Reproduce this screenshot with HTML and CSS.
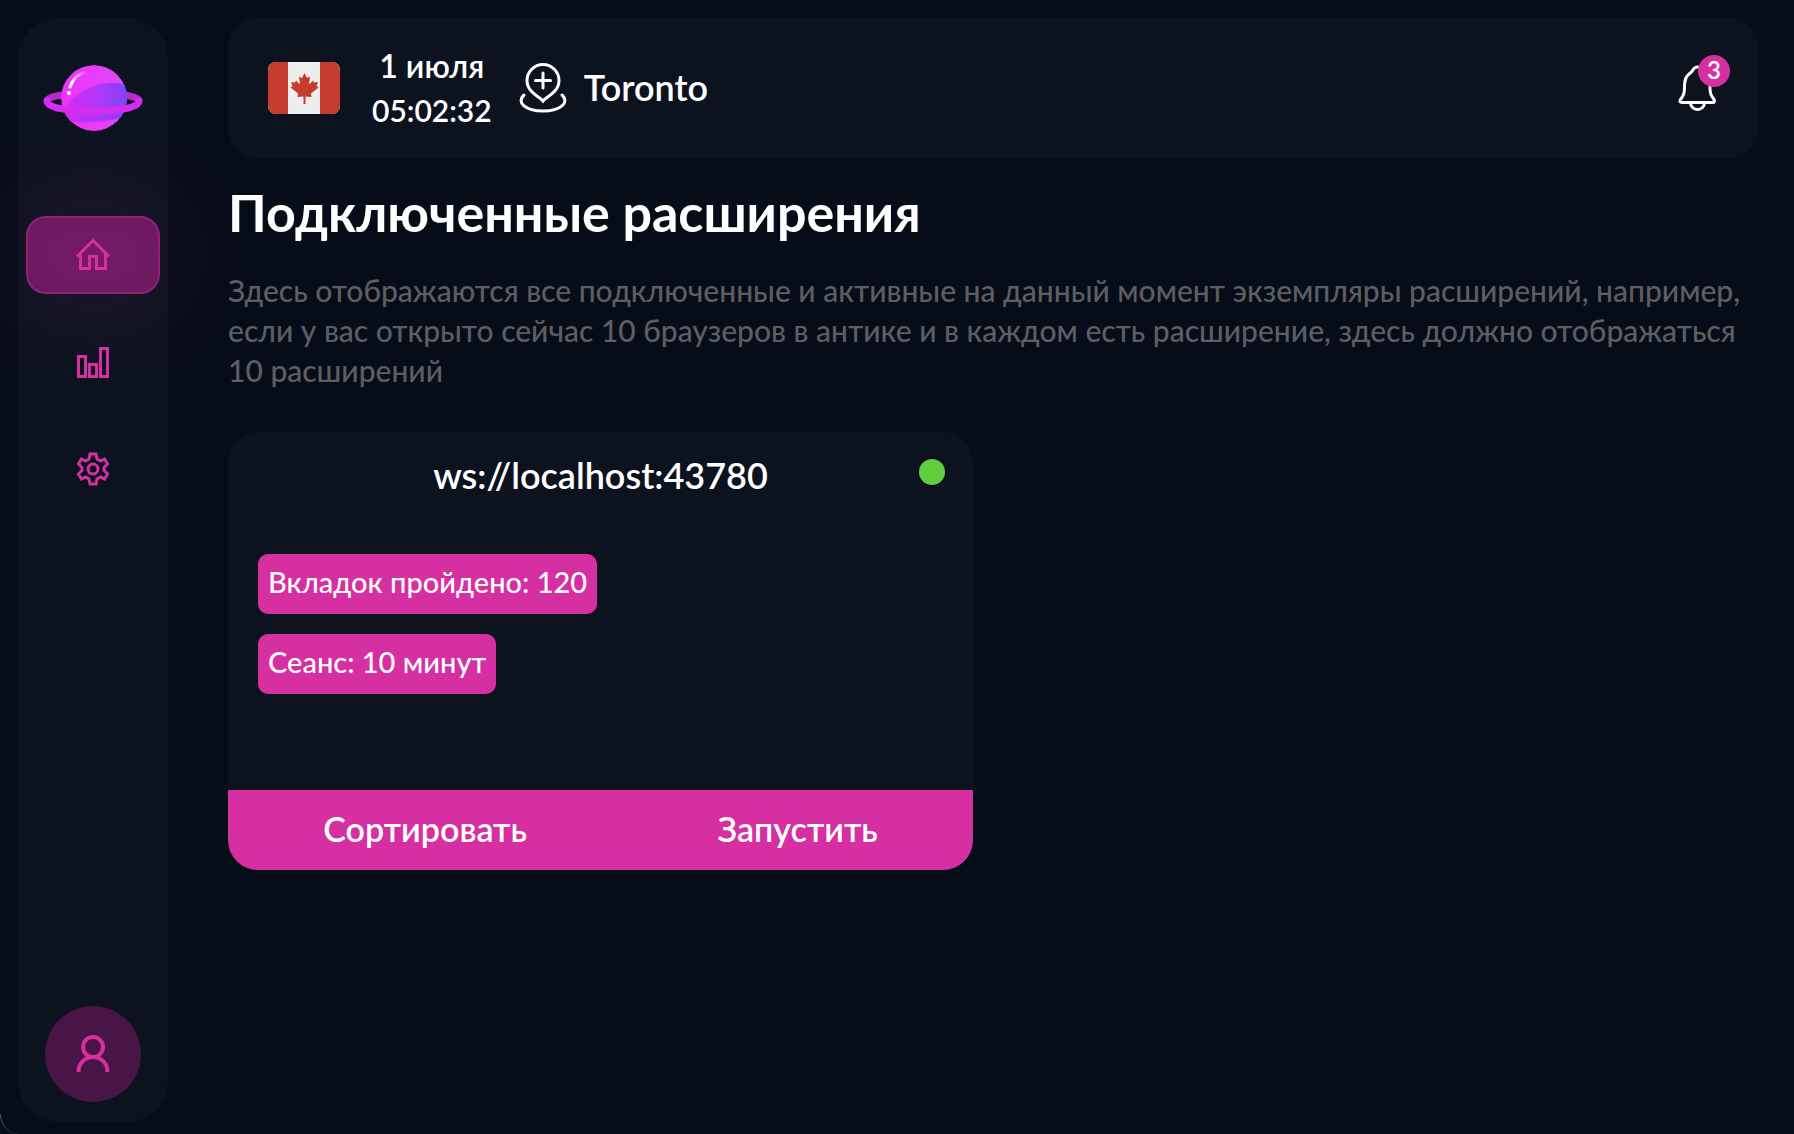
FILE: index.html
```html
<!DOCTYPE html>
<html lang="ru">
<head>
  <meta charset="utf-8">
  <meta name="viewport" content="width=device-width, initial-scale=1">
  <title>Подключенные расширения</title>
  <link rel="stylesheet" href="styles.css">
</head>
<body>
  <div class="layout">
    <aside class="sidebar">
      <a href="#" class="logo" aria-label="Главная">
        <svg width="100" height="66" viewBox="0 0 100 66">
          <defs>
            <linearGradient id="ball" x1="0" x2="1"><stop offset="0" stop-color="#ee33f8"/><stop offset="1" stop-color="#e048fb"/></linearGradient>
            <linearGradient id="band" x1="0" x2="1"><stop offset="0" stop-color="#cf2df5"/><stop offset=".5" stop-color="#b934f8"/><stop offset="1" stop-color="#7d45f8"/></linearGradient>
            <linearGradient id="shine" x1="0" y1="1" x2="1" y2="0"><stop offset=".2" stop-color="#fff"/><stop offset="1" stop-color="#fff" stop-opacity="0"/></linearGradient>
            <clipPath id="disc"><circle cx="51" cy="33" r="33"/></clipPath>
          </defs>
          <path d="M20 30C11 31 4 33 4 36M80 30c9 1 16 3 16 6" fill="none" stroke="#b42acb" stroke-width="7"/>
          <g clip-path="url(#disc)">
            <circle cx="51" cy="33" r="33" fill="url(#ball)"/>
            <path d="M22 43C35 23 62 13 84 20v31C65 57 45 59 20 56z" fill="url(#band)"/>
          </g>
          <path d="M4 36c0 7 21 10 46 10s46-3 46-10" fill="none" stroke="#d52df3" stroke-width="7" stroke-linecap="round"/>
          <path d="M27 22C30 14 35 8 44 7" fill="none" stroke="url(#shine)" stroke-width="3" stroke-linecap="round"/>
          <circle cx="26" cy="28" r="2" fill="#fff"/>
        </svg>
      </a>
      <nav class="menu">
        <a href="#" class="menu-item active" aria-label="Главная">
          <svg class="icon" width="34" height="34" viewBox="0 0 34 34"><path d="M1 18.500L17 2.500l16 16M4.500 15.500v15h9V18.500h7v12h9v-15"/></svg>
        </a>
        <a href="#" class="menu-item" aria-label="Статистика">
          <svg class="icon" width="34" height="34" viewBox="0 0 34 34"><path d="M2.500 11.500h7v20h-7zM13.500 19.500h7v12h-7zM24.500 3.500h7v28h-7z"/></svg>
        </a>
        <a href="#" class="menu-item" aria-label="Настройки">
          <svg class="icon" width="34" height="34" viewBox="0 0 34 34"><path d="M14 2h6l1 5 3.500 2 4-2 3 5-3.500 3.500v3l3.500 3.500-3 5-4-2L21 27l-1 5h-6l-1-5-3.500-2-4 2-3-5L6 18.500v-3L2.500 12l3-5 4 2L13 7z"/><circle cx="17" cy="17" r="5"/></svg>
        </a>
      </nav>
      <a href="#" class="profile" aria-label="Профиль">
        <svg width="34" height="38" viewBox="0 0 34 38"><circle cx="17" cy="12" r="10"/><path d="M2.500 37C2.500 28 9 22 17 22s14.500 6 14.500 15"/></svg>
      </a>
    </aside>

    <main class="content">
      <header class="header">
        <svg class="flag" width="72" height="52" viewBox="0 0 72 52">
          <path fill="#eee" d="M0 0h72v52H0z"/>
          <path fill="#c53d2d" d="M0 0h20v52H0zM52 0h20v52H52zM36.500 11l2.500 5 3-1.500-1 8 4-4 1 2 4-.5-1.500 4 2 1.500-7.500 6 .5 3.500-6-.5v7.500h-2v-7.500l-6 .5.500-3.500-7.500-6 2-1.500-1.500-4 4 .5 1-2 4 4-1-8 3 1.500z"/>
        </svg>
        <div class="time">
          <span>1 июля</span>
          <span class="clock">05:02:32</span>
        </div>
        <div class="place">
          <svg width="50" height="50" viewBox="0 0 50 50"><path d="M25 38c-3-4-16-8.500-16-20.500a16 16 0 0 1 32 0C41 29.500 28 34 25 38zM25 10v15M17.500 17.500h15M6 32c-8 7 1 16 19 16s27-9 19-16"/></svg>
          <span class="city">Toronto</span>
        </div>
        <button class="bell" type="button" aria-label="Уведомления">
          <svg width="38" height="46" viewBox="0 0 38 46"><path d="M16 3.500c2-2 5-2 7 0 1 3 4 4 6 6 3 3 3 8 3 13 0 6 1 8 4 12 1 2 0 3-1 3H4c-2 0-2.500-1.500-1.500-3 3-4 4-6 4-12 0-5 0-9 3.500-12.500 3-2 4-3 6-6.500zM12.500 37.500c0 4 3 7 7 7s7-3 7-7"/></svg>
          <span class="badge">3</span>
        </button>
      </header>

      <h1 class="title">Подключенные расширения</h1>
      <p class="description">Здесь отображаются все подключенные и активные на данный момент экземпляры расширений, например, если у вас открыто сейчас 10 браузеров в антике и в каждом есть расширение, здесь должно отображаться 10 расширений</p>

      <div class="cards">
        <section class="card">
          <div class="card-head">
            <h2 class="card-title">ws://localhost:43780</h2>
            <span class="status"></span>
          </div>
          <div class="card-body">
            <span class="chip">Вкладок пройдено: 120</span>
            <span class="chip">Сеанс: 10 минут</span>
          </div>
          <div class="card-footer">
            <button type="button">Сортировать</button>
            <button type="button">Запустить</button>
          </div>
        </section>
      </div>
    </main>
  </div>
  <span class="corner"></span>
</body>
</html>
```

FILE: styles.css
```css
* {box-sizing: border-box;}
body {margin: 0; background: #060d18; color: #fff; font-family: Lato, "Open Sans", sans-serif; font-weight: 500;}
button {border: none; padding: 0; background: none; color: inherit; font: inherit; cursor: pointer;}

.layout {display: flex; gap: 60px; min-height: 100vh; padding: 18px 36px 12px 18px;}

/* sidebar */
.sidebar {display: flex; flex-direction: column; align-items: center; flex: none; width: 150px; padding: 47px 8px 20px; border-radius: 40px; background: #0c131f;}
.logo svg {display: block;}
.menu {display: flex; flex-direction: column; gap: 29px; width: 100%; margin-top: 85px;}
.menu-item {display: flex; align-items: center; justify-content: center; height: 78px; border: 2px solid transparent; border-radius: 20px;}
.menu-item.active {border-color: #90207c; background: radial-gradient(#771b68, #6c195f); box-shadow: 0 0 120px rgba(214, 47, 162, 0.2);}
.icon {fill: none; stroke: #d62fa2; stroke-width: 3;}
.profile {display: flex; align-items: center; justify-content: center; width: 96px; height: 96px; margin-top: auto; border-radius: 50%; background: #491546;}
.profile svg {fill: none; stroke: #d62fa2; stroke-width: 4;}

/* top bar */
.content {flex: 1; min-width: 0;}
.header {display: flex; align-items: center; height: 140px; padding: 0 42px 0 40px; border-radius: 30px; background: #0c131f; font-size: 32px; line-height: 44px; font-weight: 600;}
.flag {border-radius: 8px;}
.time {display: flex; flex-direction: column; align-items: center; margin-left: 32px;}
.clock {font-size: 30px;}
.place {display: flex; align-items: center; gap: 16px; margin-left: 26px;}
.city {padding-bottom: 2px; font-size: 36px;}
.place svg, .bell svg {display: block; fill: none; stroke: #fff; stroke-width: 3; stroke-linecap: round;}
.bell {position: relative; margin-left: auto;}
.badge {position: absolute; top: -10px; right: -14px; width: 32px; height: 32px; border-radius: 50%; background: #d62fa2; font-size: 24px; line-height: 30px; text-align: center;}

.title {margin: 18px 0 0; font-size: 52px; line-height: 72px; font-weight: 700;}
.description {margin: 22px 0 0; color: #5c5e63; font-size: 30px; line-height: 40px;}

/* extension cards */
.cards {display: grid; grid-template-columns: 1fr 1fr; gap: 40px; margin-top: 42px;}
.card {overflow: hidden; border-radius: 30px; background: #0c131f;}
.card-head {position: relative; padding: 21px 30px 23px;}
.card-title {margin: 0; font-size: 36px; line-height: 44px; font-weight: 600; text-align: center;}
.status {position: absolute; top: 27px; right: 28px; width: 26px; height: 26px; border-radius: 50%; background: #5fce3e;}
.card-body {display: flex; flex-direction: column; align-items: flex-start; gap: 20px; min-height: 270px; padding: 34px 30px;}
.chip {padding: 8px 10px 12px; border-radius: 10px; background: #d62fa2; font-size: 29px; line-height: 40px;}
.card-footer {display: flex; justify-content: space-around; height: 80px; padding-bottom: 4px; background: #d62fa2; font-size: 34px; font-weight: 600;}

/* window edge */
.corner {position: fixed; left: 0; bottom: 0; width: 20px; height: 20px; border-left: 1px solid #55595f; border-bottom-left-radius: 20px;}
```
